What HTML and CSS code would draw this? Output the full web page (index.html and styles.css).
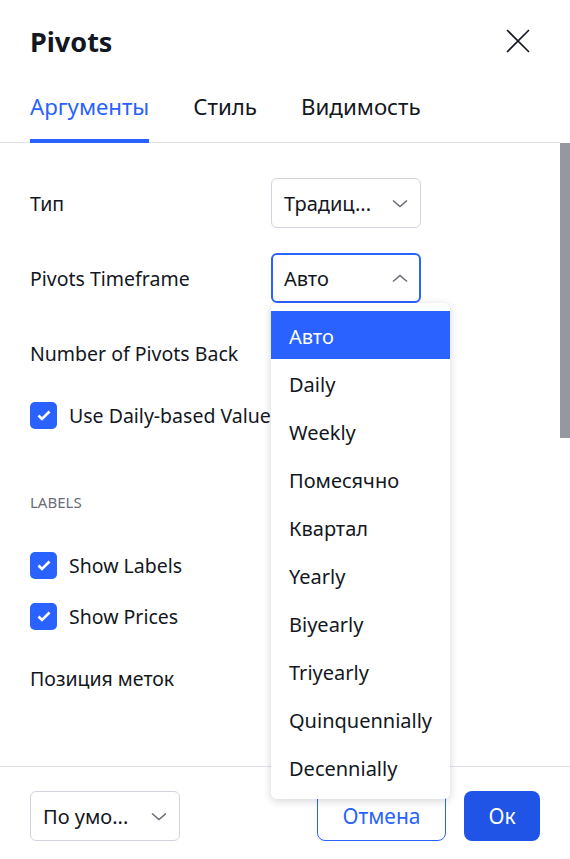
FILE: index.html
```html
<!DOCTYPE html>
<html lang="ru">
<head>
  <meta charset="UTF-8" />
  <title>Pivots</title>
  <link rel="stylesheet" href="styles.css">
</head>
<body>
<div class="dialog">
  <div class="header">
    <h2 class="title">Pivots</h2>
    <button type="button" class="close">
      <svg width="24" height="24" viewBox="0 0 24 24"><path d="M1 1 L23 23 M23 1 L1 23" stroke="#131722" stroke-width="1.6" fill="none"/></svg>
    </button>
  </div>

  <div class="tabs">
    <div class="tab active">Аргументы</div>
    <div class="tab">Стиль</div>
    <div class="tab">Видимость</div>
  </div>

  <div class="body">
    <div class="scrollbar"></div>

    <div class="row first">
      <div class="label">Тип</div>
      <div class="select">
        <span>Традиц...</span>
        <svg class="chevron" width="16" height="9" viewBox="0 0 16 9"><path d="M1 1.5 L8 7.5 L15 1.5" stroke="#6a6d78" stroke-width="1.6" fill="none"/></svg>
      </div>
    </div>

    <div class="row">
      <div class="label">Pivots Timeframe</div>
      <div class="select open">
        <span>Авто</span>
        <svg class="chevron" width="16" height="9" viewBox="0 0 16 9"><path d="M1 7.5 L8 1.5 L15 7.5" stroke="#6a6d78" stroke-width="1.6" fill="none"/></svg>
      </div>
    </div>

    <div class="row">
      <div class="label">Number of Pivots Back</div>
    </div>

    <label class="check-row">
      <span class="checkbox"><svg width="16" height="13" viewBox="0 0 16 13"><path d="M2.5 6.5 L6 10 L13.5 2.5" stroke="#fff" stroke-width="2.6" fill="none"/></svg></span>
      Use Daily-based Values
    </label>

    <div class="section-title">LABELS</div>

    <label class="check-row labels">
      <span class="checkbox"><svg width="16" height="13" viewBox="0 0 16 13"><path d="M2.5 6.5 L6 10 L13.5 2.5" stroke="#fff" stroke-width="2.6" fill="none"/></svg></span>
      Show Labels
    </label>
    <label class="check-row prices">
      <span class="checkbox"><svg width="16" height="13" viewBox="0 0 16 13"><path d="M2.5 6.5 L6 10 L13.5 2.5" stroke="#fff" stroke-width="2.6" fill="none"/></svg></span>
      Show Prices
    </label>

    <div class="row position">
      <div class="label">Позиция меток</div>
    </div>

    <div class="menu">
      <div class="item selected">Авто</div>
      <div class="item">Daily</div>
      <div class="item">Weekly</div>
      <div class="item">Помесячно</div>
      <div class="item">Квартал</div>
      <div class="item">Yearly</div>
      <div class="item">Biyearly</div>
      <div class="item">Triyearly</div>
      <div class="item">Quinquennially</div>
      <div class="item">Decennially</div>
    </div>
  </div>

  <div class="footer">
    <div class="select small">
      <span>По умо...</span>
      <svg class="chevron" width="16" height="9" viewBox="0 0 16 9"><path d="M1 1.5 L8 7.5 L15 1.5" stroke="#6a6d78" stroke-width="1.6" fill="none"/></svg>
    </div>
    <div class="buttons">
      <button type="button" class="btn cancel">Отмена</button>
      <button type="button" class="btn ok">Ок</button>
    </div>
  </div>
</div>
</body>
</html>
```

FILE: styles.css
```css
* {
  box-sizing: border-box;
}
body {
  margin: 0;
  font-family: "Noto Sans", sans-serif;
  font-size: 19.5px;
  color: #131722;
  background: #fff;
}
.dialog {
  position: relative;
  width: 570px;
  height: 859px;
  overflow: hidden;
}
.header {
  display: flex;
  justify-content: space-between;
  align-items: center;
  padding: 20px 40px 0 30px;
  height: 62px;
}
.title {
  margin: 0;
  font-size: 27px;
  font-weight: bold;
}
.close {
  border: none;
  background: none;
  padding: 0;
  width: 24px;
  height: 24px;
}
.tabs {
  display: flex;
  gap: 44px;
  padding: 0 30px;
  height: 81px;
  align-items: flex-end;
  border-bottom: 1px solid #e0e3eb;
  margin-right: 10px;
}
.tab {
  font-size: 22.3px;
  padding-bottom: 17px;
  border-bottom: 4px solid transparent;
  margin-bottom: -1px;
}
.tab.active {
  color: #2962ff;
  border-bottom-color: #2962ff;
}
.body {
  position: relative;
  height: 623px;
  padding: 35px 30px 0;
}
.scrollbar {
  position: absolute;
  right: 0;
  top: 0;
  width: 10px;
  height: 295px;
  background: #9598a1;
}
.row {
  display: flex;
  align-items: center;
  height: 50px;
  margin-top: 25px;
}
.row.first {
  margin-top: 0;
}
.label {
  width: 241px;
}
.select {
  display: flex;
  justify-content: space-between;
  align-items: center;
  width: 150px;
  height: 50px;
  padding: 0 12px;
  border: 1px solid #d1d4dc;
  border-radius: 6px;
  font-size: 20px;
}
.select.open {
  border: 2px solid #2962ff;
  padding: 0 11px;
}
.check-row {
  display: flex;
  align-items: center;
  gap: 12px;
  margin-top: 24px;
  height: 26px;
}
.checkbox {
  display: flex;
  align-items: center;
  justify-content: center;
  width: 27px;
  height: 27px;
  border-radius: 5px;
  background: #2962ff;
}
.section-title {
  margin-top: 64px;
  font-size: 15px;
  color: #6a6d78;
}
.check-row.labels {
  margin-top: 40px;
}
.check-row.prices {
  margin-top: 25px;
}
.row.position {
  margin-top: 24px;
}
.menu {
  position: absolute;
  left: 271px;
  top: 160px;
  width: 179px;
  padding: 8px 0;
  background: #fff;
  border-radius: 6px;
  box-shadow: 0 2px 8px rgba(19, 23, 34, 0.18);
}
.item {
  display: flex;
  align-items: center;
  height: 48px;
  padding: 3px 0 0 18px;
  font-size: 20px;
}
.item.selected {
  background: #2962ff;
  color: #fff;
}
.footer {
  display: flex;
  justify-content: space-between;
  align-items: flex-start;
  height: 93px;
  padding: 24px 30px 0;
  border-top: 1px solid #e0e3eb;
}
.buttons {
  display: flex;
  gap: 18px;
}
.btn {
  height: 50px;
  border-radius: 8px;
  font-family: inherit;
  font-size: 21px;
}
.cancel {
  width: 129px;
  background: #fff;
  color: #2962ff;
  border: 1px solid #2962ff;
}
.ok {
  width: 76px;
  background: #1f54e6;
  color: #fff;
  border: none;
}
```
